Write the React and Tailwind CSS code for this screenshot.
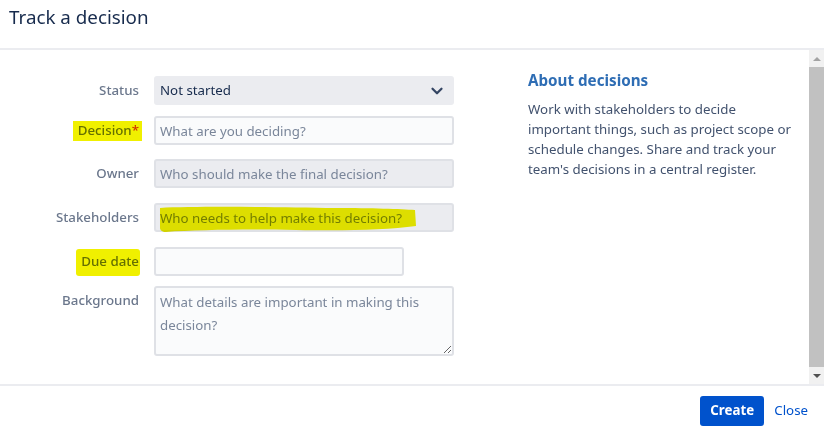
import { ChevronDown } from 'lucide-react';

const inputBase =
  'h-[29px] rounded-[3px] border-2 px-[4px] text-[13.3px] text-[#172B4D] placeholder:text-[#7A869A] outline-none';

function Label({ children, className = '' }) {
  return (
    <div className={`w-[139px] shrink-0 text-right text-[13.3px] font-medium text-[#6B778C] ${className}`}>
      {children}
    </div>
  );
}

function Mark({ className }) {
  // yellow marker highlight laid over the text
  return (
    <span
      className={`absolute bg-[#f0f000] mix-blend-multiply pointer-events-none ${className}`}
    />
  );
}

export default function App() {
  return (
    <div className="w-[824px] h-[433px] bg-white flex flex-col overflow-hidden font-['Noto_Sans',sans-serif] text-[#172B4D]">
      <header className="h-[50px] shrink-0 border-b-2 border-[#EBECF0] px-[9px] pt-[3px]">
        <h1 className="text-[18.8px] leading-[28px] text-[#172B4D]">Track a decision</h1>
      </header>

      <div className="flex-1 flex min-h-0">
        <div className="flex-1 flex pt-[26px]">
          <form className="w-[454px] shrink-0 flex flex-col">
            <div className="flex items-center gap-[15px]">
              <Label>Status</Label>
              <div className="w-[300px] h-[29px] rounded-[3px] bg-[#EBECF0] flex items-center px-[6px] text-[13.3px]">
                <span className="flex-1">Not started</span>
                <ChevronDown size={18} strokeWidth={3} className="text-[#344563] mr-[2px]" />
              </div>
            </div>

            <div className="flex items-center gap-[15px] mt-[11px]">
              <Label>
                <span className="relative inline-block">
                  <Mark className="-left-[5px] -right-[3px] top-[0px] bottom-[-1px]" />
                  Decision<span className="text-[#DE350B]">*</span>
                </span>
              </Label>
              <input
                className={`${inputBase} w-[300px] bg-[#FAFBFC] border-[#DFE1E6]`}
                placeholder="What are you deciding?"
              />
            </div>

            <div className="flex items-center gap-[15px] mt-[14px]">
              <Label>Owner</Label>
              <input
                className={`${inputBase} w-[300px] bg-[#EBECF0] border-[#DFE1E6]`}
                placeholder="Who should make the final decision?"
              />
            </div>

            <div className="flex items-center gap-[15px] mt-[15px]">
              <Label>Stakeholders</Label>
              <div className="relative w-[300px]">
                <input
                  className={`${inputBase} w-[300px] bg-[#EBECF0] border-[#DFE1E6]`}
                  placeholder="Who needs to help make this decision?"
                />
                <svg
                  className="absolute left-[2px] top-[1px] pointer-events-none mix-blend-multiply"
                  width="262"
                  height="30"
                  viewBox="0 0 262 30"
                >
                  <path
                    d="M4 4 C40 2 120 3 180 4 C215 4 245 5 259 6 L260 22 C230 26 190 27 140 26 C90 25 40 26 10 28 C6 28 4 26 4 24 Z"
                    fill="#f0f000"
                  />
                </svg>
              </div>
            </div>

            <div className="flex items-center gap-[15px] mt-[15px]">
              <Label>
                <span className="relative inline-block">
                  <Mark className="-left-[5px] -right-[1px] -top-[3px] -bottom-[5px] rounded-[3px]" />
                  Due date
                </span>
              </Label>
              <input className={`${inputBase} w-[250px] bg-[#FAFBFC] border-[#DFE1E6]`} />
            </div>

            <div className="flex items-start gap-[15px] mt-[10px]">
              <Label className="pt-[5px]">Background</Label>
              <textarea
                className="w-[300px] h-[70px] rounded-[3px] border-2 border-[#DFE1E6] bg-[#FAFBFC] px-[4px] py-[3px] text-[13.3px] leading-[23px] text-[#172B4D] placeholder:text-[#7A869A] outline-none resize-y"
                placeholder="What details are important in making this decision?"
              />
            </div>
          </form>

          <aside className="ml-[74px] w-[275px]">
            <h2 className="text-[15.2px] font-bold leading-[20px] text-[#2E6DB4] -mt-[6px]">
              About decisions
            </h2>
            <p className="mt-[9px] text-[13.3px] leading-[20px] text-[#42526E]">
              Work with stakeholders to decide
              <br />
              important things, such as project scope or schedule changes. Share and track your
              team's decisions in a central register.
            </p>
          </aside>
        </div>

        <div className="w-[15px] shrink-0 bg-[#F1F1F1] flex flex-col items-center">
          <div className="h-[17px] flex items-center justify-center">
            <span className="w-0 h-0 border-l-[4px] border-r-[4px] border-b-[4px] border-l-transparent border-r-transparent border-b-[#A3A3A3]" />
          </div>
          <div className="flex-1 w-[15px] bg-[#C1C1C1]" />
          <div className="h-[17px] flex items-center justify-center">
            <span className="w-0 h-0 border-l-[4px] border-r-[4px] border-t-[4px] border-l-transparent border-r-transparent border-t-[#505050]" />
          </div>
        </div>
      </div>

      <footer className="h-[49px] shrink-0 border-t-2 border-[#EBECF0] flex items-center justify-end pr-[16px] pt-[3px]">
        <button className="h-[30px] w-[64px] rounded-[3px] bg-[#0052CC] text-white text-[13.3px] font-bold">
          Create
        </button>
        <button className="ml-[10px] text-[13.3px] text-[#0052CC]">Close</button>
      </footer>
    </div>
  );
}
